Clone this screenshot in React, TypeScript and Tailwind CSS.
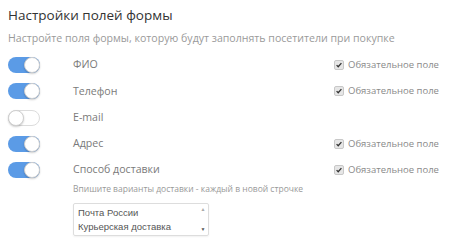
import { useState } from "react"

type Field = { label: string; on: boolean; required: boolean }

function Toggle({ on }: { on: boolean }) {
  return (
    <div
      className={`relative h-[16px] w-[32px] rounded-full ${
        on ? "bg-[#5b9be6]" : "border border-[#dcdcdc] bg-white"
      }`}
    >
      <div
        className={`absolute top-1/2 h-[16px] w-[16px] -translate-y-1/2 rounded-full border border-[#cfcfcf] bg-white shadow-[0_1px_2px_rgba(0,0,0,0.2)] ${
          on ? "right-0" : "-left-px"
        }`}
      />
    </div>
  )
}

function Check() {
  return (
    <span className="flex h-[10px] w-[10px] items-center justify-center rounded-[2px] border border-[#c8c8c8] bg-[#e6e6e6]">
      <svg viewBox="0 0 10 10" className="h-[8px] w-[8px]">
        <path d="M2 5.2 L4 7.2 L8 2.6" fill="none" stroke="#333" strokeWidth="1.6" />
      </svg>
    </span>
  )
}

export default function App() {
  const [fields] = useState<Field[]>([
    { label: "ФИО", on: true, required: true },
    { label: "Телефон", on: true, required: true },
    { label: "E-mail", on: false, required: false },
    { label: "Адрес", on: true, required: true },
    { label: "Способ доставки", on: true, required: true },
  ])

  return (
    <div className="h-[243px] w-[450px] overflow-hidden bg-white px-2 pt-[4px] font-['Open_Sans',sans-serif]">
      <h2 className="whitespace-nowrap text-[13.5px] leading-[22px] text-[#333]">Настройки полей формы</h2>
      <p className="mt-[4px] whitespace-nowrap text-[10.6px] leading-[16px] text-[#9a9a9a]">
        Настройте поля формы, которую будут заполнять посетители при покупке
      </p>

      <div className="mt-[6px]">
        {fields.map((f) => (
          <div key={f.label} className="flex h-[26.3px] items-center">
            <Toggle on={f.on} />
            <span className="ml-[33px] w-[261px] whitespace-nowrap text-[10.6px] text-[#7a7a7a]">{f.label}</span>
            {f.required && (
              <span className="flex items-center gap-[4px] whitespace-nowrap text-[9.5px] text-[#8a8a8a]">
                <Check />
                Обязательное поле
              </span>
            )}
          </div>
        ))}
      </div>

      <div className="ml-[65px]">
        <p className="whitespace-nowrap text-[8.5px] leading-[12px] text-[#999]">
          Впишите варианты доставки - каждый в новой строчке
        </p>
        <div className="mt-[8px] flex h-[33px] w-[136px] rounded-[2px] border border-[#ddd] shadow-[0_1px_2px_rgba(0,0,0,0.06)]">
          <div className="flex-1 px-[4px] pt-[2px] font-['Liberation_Sans',sans-serif] text-[9.5px] leading-[14px] text-[#555]">
            <div>Почта России</div>
            <div>Курьерская доставка</div>
          </div>
          <div className="flex w-[10px] flex-col items-center justify-between py-[3px] text-[5px] leading-none text-[#aaa]">
            <span>▲</span>
            <span className="text-[#555]">▼</span>
          </div>
        </div>
      </div>
    </div>
  )
}
